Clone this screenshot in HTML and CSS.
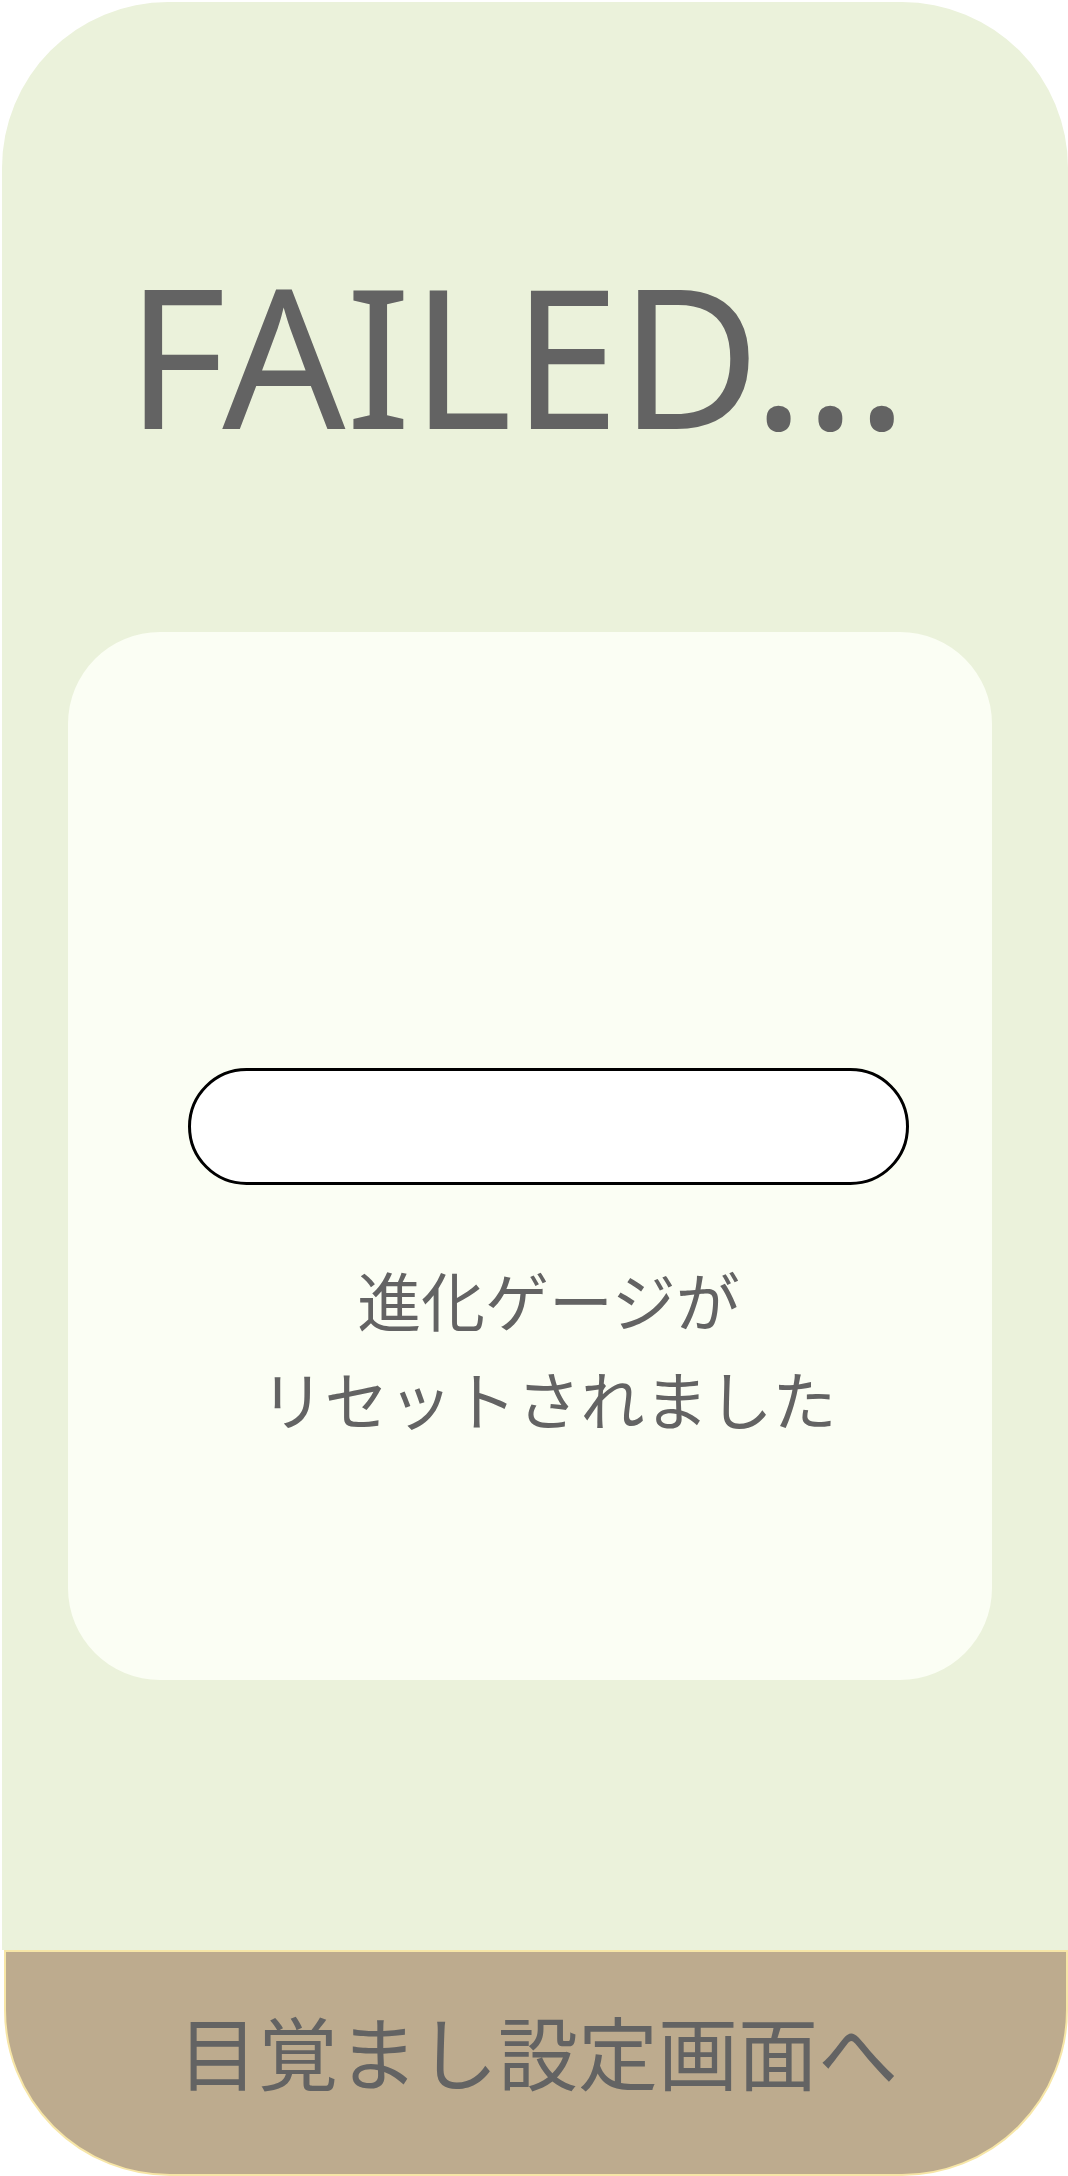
FILE: index.html
```html
<!DOCTYPE html>
<html lang="ja">
<head>
<meta charset="utf-8">
<title>FAILED</title>
<link rel="stylesheet" href="styles.css">
</head>
<body>
<div class="screen">
  <main class="panel">
    <h1 class="title">FAILED...</h1>
    <section class="card">
      <div class="card-body">
        <div class="gauge"></div>
        <p class="message">進化ゲージが<br>リセットされました</p>
      </div>
    </section>
  </main>
  <div class="nav-button" role="button">目覚まし設定画面へ</div>
</div>
</body>
</html>
```
FILE: styles.css
```css
html, body {
  margin: 0;
  padding: 0;
  background: #ffffff;
}

.screen {
  width: 1066px;
  margin: 2px 0 0 2px;
  display: flex;
  flex-direction: column;
}

.panel {
  box-sizing: border-box;
  height: 1948px;
  padding-top: 222px;
  background: #ebf2db;
  border-radius: 166px 166px 0 0;
  display: flex;
  flex-direction: column;
}

.title {
  margin: 0;
  padding-left: 124px;
  font-family: "Noto Sans", sans-serif;
  font-weight: 400;
  font-size: 193px;
  line-height: 262px;
  height: 262px;
  color: #636363;
  white-space: nowrap;
}

.card {
  box-sizing: border-box;
  margin: 146px 0 0 66px;
  width: 924px;
  height: 1048px;
  background: #fbfef4;
  border-radius: 92px;
  padding: 436px 0 0 120px;
}

.card-body {
  width: 721px;
  display: flex;
  flex-direction: column;
}

.gauge {
  box-sizing: border-box;
  height: 117px;
  border: 3px solid #000000;
  border-radius: 60px;
  background: #ffffff;
}

.message {
  margin: 64px 0 0;
  text-align: center;
  font-family: "Noto Sans CJK JP", "Noto Sans", sans-serif;
  font-size: 64px;
  line-height: 99px;
  color: #636363;
}

.nav-button {
  box-sizing: border-box;
  margin: 0 0 0 2px;
  width: 1064px;
  height: 226px;
  padding: 40px 0 0 4px;
  border: 2px solid #f7e6a7;
  border-radius: 0 0 166px 166px;
  background: #bdab8e;
  font-family: "Noto Sans CJK JP", "Noto Sans", sans-serif;
  font-size: 80px;
  line-height: 114px;
  color: #636363;
  text-align: center;
  cursor: pointer;
}
```
